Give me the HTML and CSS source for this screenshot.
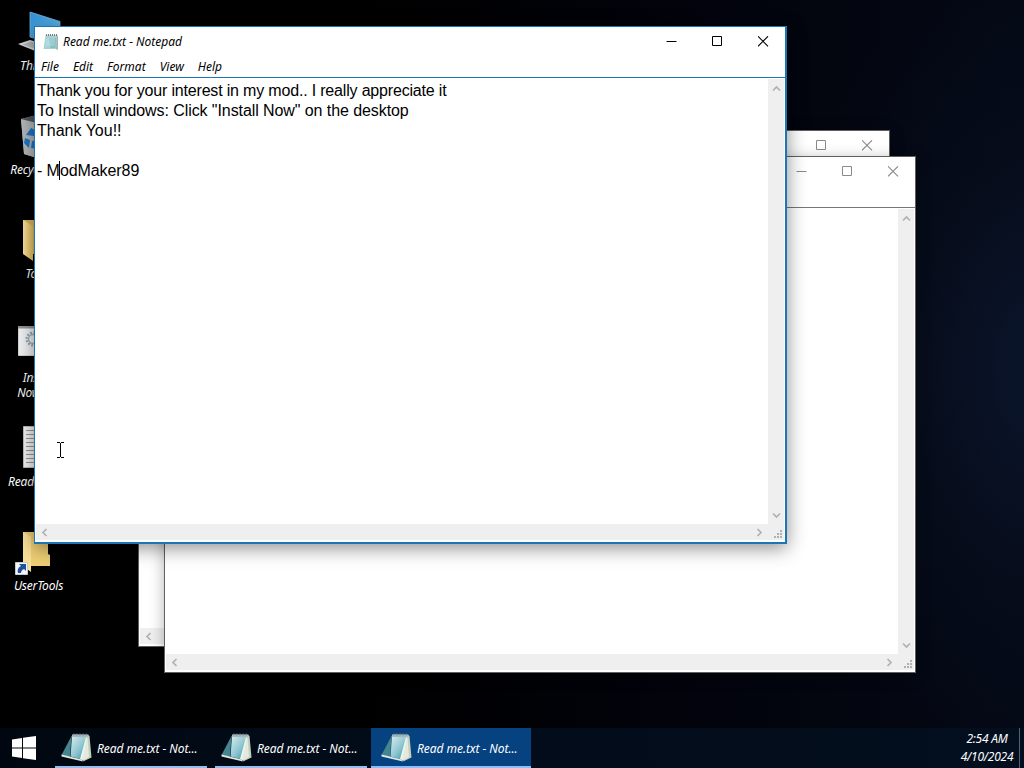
FILE: index.html
```html
<!DOCTYPE html>
<html lang="en">
<head>
  <meta charset="UTF-8">
  <meta name="viewport" content="width=device-width, initial-scale=1.0">
  <title>Desktop</title>
  <link rel="stylesheet" href="styles.css">
</head>
<body>

<!-- shared icons -->
<svg class="defs" width="0" height="0">
  <defs>
    <linearGradient id="glass" x1="0" y1="0" x2="1" y2="1">
      <stop offset="0" stop-color="#d9f0f3"/>
      <stop offset="0.5" stop-color="#92c8d2"/>
      <stop offset="1" stop-color="#2f8ba0"/>
    </linearGradient>
    <linearGradient id="folder" x1="0" y1="0" x2="1" y2="0">
      <stop offset="0" stop-color="#fae29c"/>
      <stop offset="1" stop-color="#e6c160"/>
    </linearGradient>
    <linearGradient id="screen" x1="0" y1="0" x2="1" y2="1">
      <stop offset="0" stop-color="#2f8fd5"/>
      <stop offset="1" stop-color="#6fc4f5"/>
    </linearGradient>
  </defs>
  <symbol id="notepad" viewBox="0 0 32 32">
    <path d="M27 3L28.500 4L30.500 25.500L22 29.500Z" fill="#c3cfc0"/>
    <path d="M26.500 5L28 25L22 28.500L20 27Z" fill="#e6e9d9"/>
    <path d="M10.500 4L0.500 23L9 25Z" fill="#46848f"/>
    <path d="M11 3.500L27 3.500L21 27.500L9.500 24.500Z" fill="url(#glass)"/>
    <path d="M25 5L27 4L21.500 28L19 27Z" fill="#e9f3ef"/>
    <path d="M0.500 22.500L21 27.500L22 29.500L0.500 24.500Z" fill="#dde9e4"/>
    <path d="M11.500 2.300L27.500 2.500L27 5.500L10.500 5Z" fill="#aebfc1"/>
    <path d="M13 1.500v3M16 1.500v3M19 1.500v3M22 1.500v3M25 1.500v3" stroke="#7d8e92" stroke-width="0.900"/>
  </symbol>
  <symbol id="minimize" viewBox="0 0 11 11"><path d="M0.500 5.500h10" stroke="currentColor"/></symbol>
  <symbol id="maximize" viewBox="0 0 11 11"><path d="M0.500 0.500h9v9h-9z" fill="none" stroke="currentColor"/></symbol>
  <symbol id="close" viewBox="0 0 11 11"><path d="M0 0.300l10 10M10 0.300l-10 10" stroke="currentColor" stroke-width="1.100"/></symbol>
  <symbol id="arrow" viewBox="0 0 9 9"><path d="M1 6.500l3.500-3.500 3.500 3.500" fill="none" stroke="currentColor" stroke-width="1.700"/></symbol>
  <symbol id="grip" viewBox="0 0 9 9"><path d="M6 0h2v2h-2zM3 3h2v2h-2zM6 3h2v2h-2zM0 6h2v2h-2zM3 6h2v2h-2zM6 6h2v2h-2z" fill="currentColor"/></symbol>
</svg>

<div class="screen">
  <div class="desktop">

    <div class="icons">
      <div class="icon">
        <svg width="48" height="48" viewBox="0 0 48 48">
          <path d="M15 0L45 9.500v24L15 25z" fill="url(#screen)" stroke="#7fb4d8" stroke-width="0.800"/>
          <path d="M3 32l12-4 24 7-14 6z" fill="#d7dadb"/>
          <path d="M7 32.500l9-3 18 5-8 4z" fill="#b4b8ba"/>
        </svg>
        <span>This PC</span>
      </div>
      <div class="icon">
        <svg width="48" height="48" viewBox="0 0 48 48">
          <path d="M6 3l16-4 20 4-5 34-15 5-13-4z" fill="#a6abad"/>
          <path d="M6 3l14 4 2 35-13-4z" fill="#b4b8ba"/>
          <path d="M6 3l16-4 20 4-20 4z" fill="#51575a"/>
          <path d="M11 19l5-7 6 3-3 5zM10 22l5 2-1 8-5-5zM17 25l8-1-2 9-7-1z" fill="#1c78c9"/>
        </svg>
        <span>Recycle Bin</span>
      </div>
      <div class="icon">
        <svg width="48" height="48" viewBox="0 0 48 48">
          <path d="M8 0h25v34h-25z" fill="#d9b55d"/>
          <path d="M8 0l10 6v35l-10-7z" fill="url(#folder)"/>
        </svg>
        <span>Tools</span>
      </div>
      <div class="icon">
        <svg width="48" height="48" viewBox="0 0 48 48">
          <path d="M3.500 2.500h41v29h-41z" fill="#eef0f2" stroke="#cfd2d5"/>
          <path d="M3 2h42v2.500h-42z" fill="#8f9396"/>
          <circle cx="18" cy="15" r="6" fill="none" stroke="#8ea3b0" stroke-width="3" stroke-dasharray="1.600 1.500"/>
          <circle cx="18" cy="15" r="4.500" fill="none" stroke="#a3b4bf" stroke-width="1.500"/>
        </svg>
        <span>Install<br>Now.bat</span>
      </div>
      <div class="icon">
        <svg width="48" height="48" viewBox="0 0 48 48">
          <path d="M8.500 -1.500h31v41h-31z" fill="#f2f2f2" stroke="#bbb"/>
          <path d="M11 2.500h26M11 6.500h26M11 10.500h26M11 14.500h26M11 18.500h26M11 22.500h26M11 26.500h26M11 30.500h26M11 34.500h26" stroke="#999"/>
        </svg>
        <span>Read me.txt</span>
      </div>
      <div class="icon">
        <svg width="48" height="48" viewBox="0 0 48 48">
          <path d="M8 0h25v22l2 1v11h-27z" fill="#efcf75"/>
          <path d="M8 0l8 5v35l-8-6z" fill="#fadf98"/>
          <path d="M0.500 30.500h12v12h-12z" fill="#f4f6f9" stroke="#c5cad1"/>
          <path d="M3 41c-1-4 1-6 3-7l-2-2h7v7l-2-2c-2 1-3 2-3 4z" fill="#20519a"/>
        </svg>
        <span>UserTools</span>
      </div>
    </div>

    <div class="window win-back">
      <div class="title-bar">
        <div class="controls">
          <svg><use href="#minimize"/></svg>
          <svg><use href="#maximize"/></svg>
          <svg><use href="#close"/></svg>
        </div>
      </div>
      <div class="menu"></div>
      <div class="editor">
        <div class="text"></div>
        <div class="vscroll"><svg><use href="#arrow"/></svg><svg class="down"><use href="#arrow"/></svg></div>
        <div class="hscroll"><svg class="left"><use href="#arrow"/></svg><svg class="right"><use href="#arrow"/></svg></div>
        <div class="corner"><svg><use href="#grip"/></svg></div>
      </div>
    </div>

    <div class="window win-middle">
      <div class="title-bar">
        <div class="controls">
          <svg><use href="#minimize"/></svg>
          <svg><use href="#maximize"/></svg>
          <svg><use href="#close"/></svg>
        </div>
      </div>
      <div class="menu"></div>
      <div class="editor">
        <div class="text"></div>
        <div class="vscroll"><svg><use href="#arrow"/></svg><svg class="down"><use href="#arrow"/></svg></div>
        <div class="hscroll"><svg class="left"><use href="#arrow"/></svg><svg class="right"><use href="#arrow"/></svg></div>
        <div class="corner"><svg><use href="#grip"/></svg></div>
      </div>
    </div>

    <div class="window win-front">
      <div class="title-bar">
        <svg class="app-icon" width="16" height="16" viewBox="0 0 16 16">
          <path d="M3 1.500h12v14h-2z" fill="#a9b5ae"/>
          <path d="M2.500 1.500h11.500l-1 13.500h-12.500z" fill="#a5d3d6"/>
          <path d="M6 4h7l-0.500 10h-5z" fill="#83bfc6"/>
          <path d="M3 5h9M3 7h9M2.500 9h9M2.500 11h9" stroke="#c8e8ea" stroke-width="0.700"/>
          <path d="M3.500 0v2M5.500 0v2M7.500 0v2M9.500 0v2M11.500 0v2M13.500 0v2" stroke="#647275" stroke-width="0.900"/>
        </svg>
        <span class="title">Read me.txt - Notepad</span>
        <div class="controls">
          <svg><use href="#minimize"/></svg>
          <svg><use href="#maximize"/></svg>
          <svg><use href="#close"/></svg>
        </div>
      </div>
      <div class="menu">
        <span>File</span>
        <span>Edit</span>
        <span>Format</span>
        <span>View</span>
        <span>Help</span>
      </div>
      <div class="editor">
        <div class="text">
          <p class="tight">Thank you for your interest in my mod.. I really appreciate it</p>
          <p class="snug">To Install windows: Click "Install Now" on the desktop</p>
          <p>Thank You!!</p>
          <p><br></p>
          <p class="snug">- M<i class="caret"></i>odMaker89</p>
        </div>
        <div class="vscroll"><svg><use href="#arrow"/></svg><svg class="down"><use href="#arrow"/></svg></div>
        <div class="hscroll"><svg class="left"><use href="#arrow"/></svg><svg class="right"><use href="#arrow"/></svg></div>
        <div class="corner"><svg><use href="#grip"/></svg></div>
      </div>
    </div>

    <!-- mouse pointer -->
    <svg class="pointer" width="7" height="17" viewBox="0 0 7 17">
      <path d="M0 0.500h3M4 0.500h3M3.500 1v14M0 15.500h3M4 15.500h3" stroke="#000" fill="none"/>
    </svg>
  </div>

  <div class="taskbar">
    <div class="start">
      <svg width="24" height="24" viewBox="0 0 24 24">
        <path d="M0 3.400L10 2v9.500H0zM11 1.800L24 0v11.500H11zM0 12.500h10V22L0 20.600zM11 12.500h13V24l-13-1.800z" fill="#fff"/>
      </svg>
    </div>
    <div class="task">
      <svg width="32" height="32"><use href="#notepad"/></svg>
      <span>Read me.txt - Not...</span>
    </div>
    <div class="task">
      <svg width="32" height="32"><use href="#notepad"/></svg>
      <span>Read me.txt - Not...</span>
    </div>
    <div class="task active">
      <svg width="32" height="32"><use href="#notepad"/></svg>
      <span>Read me.txt - Not...</span>
    </div>
    <div class="clock">
      <span>2:54 AM</span>
      <span>4/10/2024</span>
    </div>
    <div class="show-desktop"></div>
  </div>
</div>

</body>
</html>
```
FILE: styles.css
```css
* {
  box-sizing: border-box;
}

body {
  margin: 0;
  background-color: #000;
  font-family: "Noto Sans", "Open Sans", sans-serif;
  font-style: italic;
  font-size: 12px;
  overflow: hidden;
}

.defs {
  position: absolute;
}

svg {
  display: block;
  flex-shrink: 0;
}

.screen {
  width: 1024px;
  height: 768px;
  display: flex;
  flex-direction: column;
  background:
    radial-gradient(ellipse 260px 420px at 1040px 370px, #0b162c, rgba(8, 15, 32, 0.6) 50%, transparent),
    linear-gradient(90deg, #000 0%, #000 35%, #02030b 65%, #040814 100%);
}

.desktop {
  position: relative;
  flex: 1;
}

/* desktop icons */
.icons {
  display: flex;
  flex-direction: column;
  width: 77px;
  padding-top: 12px;
}

.icon {
  height: 104px;
  display: flex;
  flex-direction: column;
  align-items: center;
  color: #fff;
  line-height: 15px;
  text-align: center;
  letter-spacing: -0.2px;
}

.icon svg {
  overflow: visible;
}

.icon span {
  margin-top: -2px;
  white-space: nowrap;
}

/* windows */
.window {
  position: absolute;
  width: 752px;
  height: 517px;
  display: flex;
  flex-direction: column;
  background-color: #fff;
  border: 1px solid #606060;
  color: #8a8a8a;
  box-shadow: 0 3px 14px rgba(0, 0, 0, 0.3);
}

.win-back {
  left: 138px;
  top: 130px;
}

.win-middle {
  left: 164px;
  top: 156px;
}

.win-front {
  left: 34px;
  top: 26px;
  width: 753px;
  height: 518px;
  color: #000;
  border-color: #1a76b5;
  border-width: 1px 2px 2px 1px;
  box-shadow: 0 4px 18px rgba(0, 0, 0, 0.45);
}

.title-bar {
  height: 29px;
  display: flex;
  align-items: center;
  padding-left: 8px;
}

.title {
  margin-left: 4px;
}

.controls {
  display: flex;
  gap: 35px;
  margin-left: auto;
  padding-right: 16px;
}

.win-front .controls {
  padding-right: 16px;
}

.controls svg {
  width: 11px;
  height: 11px;
}

.menu {
  height: 21px;
  display: flex;
  align-items: center;
  gap: 14px;
  padding-left: 6px;
}

.editor {
  flex: 1;
  display: grid;
  grid-template-columns: 1fr 16px;
  grid-template-rows: 1fr 16px;
  border-top: 1px solid #777;
  padding: 1px 1px 2px;
}

.win-front .editor {
  border-top-color: #1a76b5;
}

.text {
  padding: 2px 0 0 1px;
  font-family: "Liberation Sans", Arial, sans-serif;
  font-style: normal;
  font-size: 16px;
  line-height: 20px;
}

.text p {
  margin: 0;
}

.text .tight {
  letter-spacing: -0.18px;
}

.text .snug {
  letter-spacing: -0.08px;
}

.caret {
  display: inline-block;
  width: 1px;
  height: 19px;
  margin: 0 0 0 -1px;
  vertical-align: -4px;
  background-color: #000;
}

.vscroll, .hscroll, .corner {
  display: flex;
  justify-content: space-between;
  align-items: center;
  background-color: #efefef;
  color: #b0b0b0;
}

.vscroll {
  flex-direction: column;
  padding: 5px 0 4px;
}

.hscroll {
  padding: 0 4px 0 4px;
}

.corner {
  justify-content: flex-end;
  align-items: flex-end;
  padding: 1px;
}

.editor svg {
  width: 9px;
  height: 9px;
}

.down {
  transform: rotate(180deg);
}

.left {
  transform: rotate(-90deg);
}

.right {
  transform: rotate(90deg);
}

.pointer {
  position: absolute;
  left: 57px;
  top: 442px;
}

/* taskbar */
.taskbar {
  height: 40px;
  display: flex;
  background: linear-gradient(90deg, #010710, #020b18 30%, #030e1e);
  color: #fff;
}

.start {
  width: 51px;
  padding: 8px 0 0 12px;
}

.task {
  width: 160px;
  display: flex;
  align-items: center;
  gap: 4px;
  padding-left: 10px;
  letter-spacing: -0.05px;
  background: linear-gradient(#90bff0, #90bff0) center bottom / 152px 2px no-repeat;
}

.task.active {
  background: #05427f;
  border-bottom: 2px solid #8bbdfa;
  padding-top: 2px;
}

.clock {
  width: 64px;
  margin-left: auto;
  display: flex;
  flex-direction: column;
  align-items: center;
  padding-top: 2px;
  line-height: 18px;
  letter-spacing: -0.25px;
}

.show-desktop {
  width: 5px;
  border-left: 1px solid #56616e;
}
```
